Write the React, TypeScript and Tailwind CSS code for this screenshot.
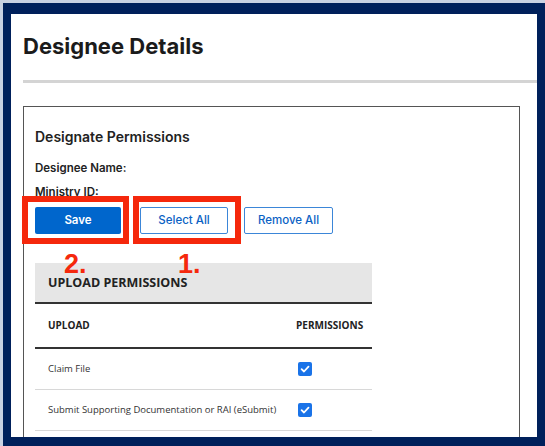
import React from 'react';

const RED = '#f5280c';

function Check() {
  return (
    <span className="flex h-[14px] w-[14px] items-center justify-center rounded-[2px] bg-[#1a73e8]">
      <svg width="10" height="10" viewBox="0 0 10 10" fill="none">
        <path d="M1.6 5.2 L4 7.5 L8.5 2.6" stroke="white" strokeWidth="1.8" strokeLinecap="round" strokeLinejoin="round" />
      </svg>
    </span>
  );
}

const rows = ['Claim File', 'Submit Supporting Documentation or RAI (eSubmit)'];

export default function App() {
  return (
    <div className="h-[446px] w-[545px] overflow-hidden bg-[#c9d1e2] pl-[3px] pt-[3px]">
      <div className="h-[443px] w-[542px] border-x-[8px] border-b-[9px] border-t-[11px] border-[#00205b] bg-white">
        <div className="h-full overflow-hidden pl-[12px]">
          <h1 className="pt-[18px] text-[22px] font-bold leading-[28px] text-[#1b1b1b]" style={{ fontFamily: 'Inter, "Liberation Sans", sans-serif' }}>
            Designee Details
          </h1>
          <div className="mt-[20px] h-[3px] bg-[#d4d4d4]" />

          <div className="mt-[23px] h-[400px] w-[497px] border border-[#555] pl-[11px] pt-[21px]" style={{ fontFamily: 'Inter, "Liberation Sans", sans-serif' }}>
            <h2 className="text-[14px] font-semibold leading-[18px] text-[#222]">Designate Permissions</h2>
            <div className="mt-[15px] text-[11.5px] font-semibold leading-[14px] text-[#222]">Designee Name:</div>
            <div className="mt-[10px] text-[11.5px] font-semibold leading-[14px] text-[#222]">Ministry ID:</div>

            <div className="relative mt-[8px] flex h-[27px] items-stretch">
              <button className="w-[86px] rounded-[2px] bg-[#0066cc] text-[11.5px] font-semibold text-white">Save</button>
              <button className="ml-[19px] w-[88px] rounded-[2px] border border-[#3b86d8] bg-white text-[11.5px] font-medium text-[#0b62c4]">Select All</button>
              <button className="ml-[16px] w-[89px] rounded-[2px] border border-[#3b86d8] bg-white text-[11.5px] font-medium text-[#0b62c4]">Remove All</button>

              <div className="absolute left-[-13px] top-[-11px] h-[48px] w-[107px] border-[6px]" style={{ borderColor: RED }} />
              <div className="absolute left-[98px] top-[-11px] h-[48px] w-[108px] border-[6px]" style={{ borderColor: RED }} />
              <span className="absolute left-[29px] top-[42px] text-[27px] font-bold leading-[30px]" style={{ color: RED, fontFamily: '"Liberation Sans", sans-serif' }}>2.</span>
              <span className="absolute left-[143px] top-[42px] text-[27px] font-bold leading-[30px]" style={{ color: RED, fontFamily: '"Liberation Sans", sans-serif' }}>1.</span>
            </div>

            <div className="mt-[29px] w-[337px]" style={{ fontFamily: '"Open Sans", "Liberation Sans", sans-serif' }}>
              <div className="flex h-[41px] items-center border-b-2 border-[#333] bg-[#e6e6e6] pl-[13px] pt-[2px] text-[12.5px] font-bold text-[#222]">
                UPLOAD PERMISSIONS
              </div>
              <div className="flex h-[45px] items-center border-b-2 border-[#333] pl-[13px] text-[10px] font-bold text-[#222]">
                <span className="w-[248px]">UPLOAD</span>
                <span>PERMISSIONS</span>
              </div>
              {rows.map((r) => (
                <div key={r} className="flex h-[41px] items-center border-b border-[#d8d8d8] pl-[13px] text-[9.5px] text-[#333]">
                  <span className="w-[250px]">{r}</span>
                  <Check />
                </div>
              ))}
            </div>
          </div>
        </div>
      </div>
    </div>
  );
}
